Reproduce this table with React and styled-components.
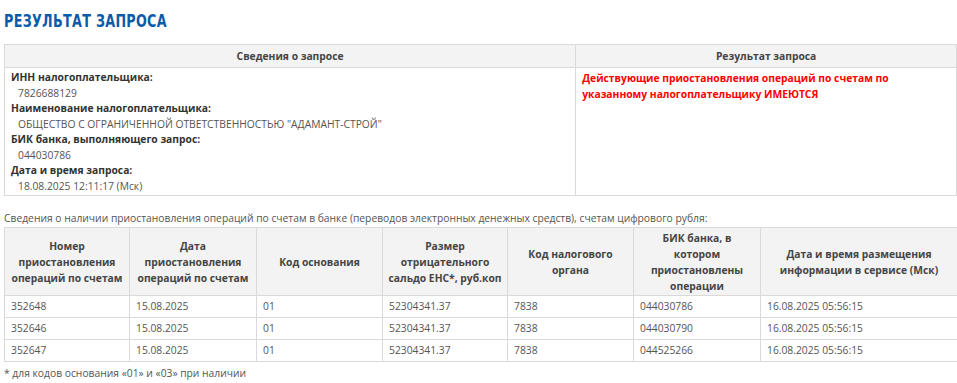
import React from "react";
import styled, { createGlobalStyle } from "styled-components";

const Global = createGlobalStyle`
  html, body { margin: 0; padding: 0; background: #fff; overflow: hidden; }
  body { font-family: "Open Sans", "Noto Sans", sans-serif; font-size: 10.3px; color: #555; }
`;

const Page = styled.div`
  padding: 10px 0 0 4px;
  width: 953px;
`;

const TitleRow = styled.div`
  height: 22px;
  margin-bottom: 12px;
`;

const Title = styled.h1`
  display: inline-block;
  margin: 0;
  font-family: "DejaVu Sans Condensed", "DejaVu Sans", sans-serif;
  font-weight: bold;
  font-size: 18.5px;
  line-height: 22px;
  color: #0c5ba8;
  letter-spacing: 0.4px;
  transform: scaleX(0.765);
  transform-origin: left center;
  white-space: nowrap;
`;

const Table = styled.table`
  width: 100%;
  border-collapse: collapse;
  table-layout: fixed;
  border: 1px solid #dadada;
`;

const Th = styled.th`
  background: #f3f3f3;
  color: #454545;
  font-weight: 700;
  font-size: 10.3px;
  line-height: 16px;
  text-align: center;
  vertical-align: middle;
  border: 1px solid #dadada;
  padding: ${(p) => (p.$tall ? "2px 5px 1px" : "3px 5px")};
`;

const Td = styled.td`
  border: 1px solid #dadada;
  vertical-align: top;
  padding: 2px 6px 1px 6px;
  line-height: 15.5px;
`;

const Label = styled.div`
  color: #333;
  font-weight: 700;
`;

const Value = styled.div`
  color: #555;
  padding-left: 7px;
`;

const Alert = styled.div`
  color: #f00;
  font-weight: 700;
  max-width: 330px;
  line-height: 16px;
`;

const Caption = styled.div`
  margin-top: 15px;
  margin-bottom: 1px;
  color: #555;
  line-height: 15px;
`;

const DataCell = styled.td`
  border: 1px solid #dadada;
  padding: 3px 6px;
  line-height: 15px;
  color: #555;
  white-space: nowrap;
`;

const Footnote = styled.div`
  margin-top: 4px;
  color: #555;
  line-height: 15px;
`;

const rows = [
  ["352648", "15.08.2025", "01", "52304341.37", "7838", "044030786", "16.08.2025 05:56:15"],
  ["352646", "15.08.2025", "01", "52304341.37", "7838", "044030790", "16.08.2025 05:56:15"],
  ["352647", "15.08.2025", "01", "52304341.37", "7838", "044525266", "16.08.2025 05:56:15"],
];

const widths = [125, 127, 126, 125, 126, 127, 197];

export default function App() {
  return (
    <>
      <Global />
      <Page>
        <TitleRow>
          <Title>РЕЗУЛЬТАТ ЗАПРОСА</Title>
        </TitleRow>
        <Table>
          <colgroup>
            <col style={{ width: "60%" }} />
            <col style={{ width: "40%" }} />
          </colgroup>
          <thead>
            <tr>
              <Th>Сведения о запросе</Th>
              <Th>Результат запроса</Th>
            </tr>
          </thead>
          <tbody>
            <tr>
              <Td>
                <Label>ИНН налогоплательщика:</Label>
                <Value>7826688129</Value>
                <Label>Наименование налогоплательщика:</Label>
                <Value>ОБЩЕСТВО С ОГРАНИЧЕННОЙ ОТВЕТСТВЕННОСТЬЮ "АДАМАНТ-СТРОЙ"</Value>
                <Label>БИК банка, выполняющего запрос:</Label>
                <Value>044030786</Value>
                <Label>Дата и время запроса:</Label>
                <Value>18.08.2025 12:11:17 (Мск)</Value>
              </Td>
              <Td>
                <Alert>
                  Действующие приостановления операций по счетам по указанному налогоплательщику ИМЕЮТСЯ
                </Alert>
              </Td>
            </tr>
          </tbody>
        </Table>
        <Caption>
          Сведения о наличии приостановления операций по счетам в банке (переводов электронных денежных средств), счетам цифрового рубля:
        </Caption>
        <Table>
          <colgroup>
            {widths.map((w, i) => (
              <col key={i} style={{ width: w }} />
            ))}
          </colgroup>
          <thead>
            <tr>
              <Th $tall>Номер приостановления операций по счетам</Th>
              <Th $tall>Дата приостановления операций по счетам</Th>
              <Th $tall>Код основания</Th>
              <Th $tall>Размер отрицательного сальдо ЕНС*, руб.коп</Th>
              <Th $tall>Код налогового органа</Th>
              <Th $tall>БИК банка, в котором приостановлены операции</Th>
              <Th $tall>Дата и время размещения информации в сервисе (Мск)</Th>
            </tr>
          </thead>
          <tbody>
            {rows.map((r, i) => (
              <tr key={i}>
                {r.map((c, j) => (
                  <DataCell key={j}>{c}</DataCell>
                ))}
              </tr>
            ))}
          </tbody>
        </Table>
        <Footnote>* для кодов основания «01» и «03» при наличии</Footnote>
      </Page>
    </>
  );
}
